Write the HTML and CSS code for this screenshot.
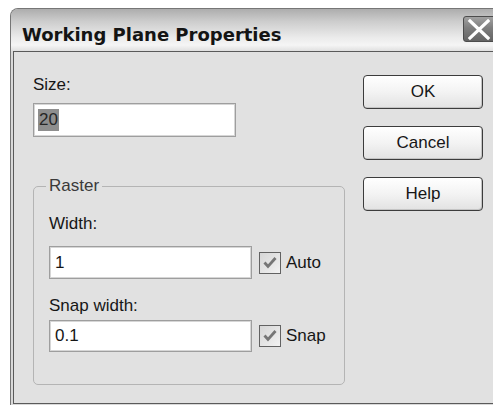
FILE: index.html
```html
<!DOCTYPE html>
<html lang="en">
<head>
<meta charset="utf-8">
<title>Working Plane Properties</title>
<link rel="stylesheet" href="styles.css">
</head>
<body>
<div class="window">
  <div class="titlebar">
    <span class="title">Working Plane Properties</span>
    <span class="close" aria-label="Close">
      <svg width="33" height="26" viewBox="0 0 33 26"><path d="M7 5 L25 22 M25 5 L7 22" stroke="#fff" stroke-width="3.2" stroke-linecap="square" fill="none"/></svg>
    </span>
  </div>
  <div class="client">
    <div class="form">
      <div class="lbl">Size:</div>
      <div class="field size-field"><span class="sel">20</span></div>
      <fieldset class="group">
        <legend>Raster</legend>
        <div class="lbl">Width:</div>
        <div class="row width-row">
          <div class="field">1</div>
          <span class="check"><svg width="20" height="20" viewBox="0 0 20 20"><path d="M4.5 9.5 L8 13.5 L15.5 5" stroke="#767676" stroke-width="2.8" fill="none"/></svg></span>
          <span class="check-text">Auto</span>
        </div>
        <div class="lbl snap-lbl">Snap width:</div>
        <div class="row snap-row">
          <div class="field">0.1</div>
          <span class="check"><svg width="20" height="20" viewBox="0 0 20 20"><path d="M4.5 9.5 L8 13.5 L15.5 5" stroke="#767676" stroke-width="2.8" fill="none"/></svg></span>
          <span class="check-text">Snap</span>
        </div>
      </fieldset>
    </div>
    <div class="buttons">
      <button class="btn">OK</button>
      <button class="btn">Cancel</button>
      <button class="btn">Help</button>
    </div>
  </div>
</div>
</body>
</html>
```
FILE: styles.css
```css
html, body {
  margin: 0;
  padding: 0;
  background: #ffffff;
  overflow: hidden;
}

body {
  font-family: "Liberation Sans", Arial, sans-serif;
  font-size: 17px;
  color: #161616;
}

/* dialog window frame */
.window {
  margin: 8px 0 0 10px;
  width: 490px;
  height: 397px;
  box-sizing: border-box;
  border: 1px solid #767676;
  border-bottom: none;
  border-radius: 8px 8px 0 0;
  background: #d9d9d9;
  display: flex;
  flex-direction: column;
}

.titlebar {
  height: 42px;
  flex: none;
  display: flex;
  justify-content: space-between;
  align-items: flex-start;
  padding: 0 3px 0 11px;
  border-radius: 7px 7px 0 0;
  background: linear-gradient(#adadad 0%, #cdcdcd 30%, #ebebeb 68%, #f5f5f5 86%, #e0e0e0 100%);
}

.title {
  font-family: "DejaVu Sans", Verdana, sans-serif;
  font-weight: bold;
  font-size: 18px;
  line-height: 21px;
  padding-top: 15px;
  color: #141414;
}

.close {
  margin-top: 7px;
  width: 33px;
  height: 26px;
  box-sizing: border-box;
  border: 1px solid #4c4c4c;
  border-radius: 3px;
  background: linear-gradient(#a2a2a2, #7e7e7e 45%, #646464);
  display: flex;
  align-items: center;
  justify-content: center;
  overflow: hidden;
}

.close svg {
  flex: none;
}

/* client area */
.client {
  flex: none;
  height: 353px;
  box-sizing: border-box;
  margin-left: 2px;
  border-left: 1px solid #5a5a5a;
  border-top: 1px solid #5a5a5a;
  border-bottom: 1px solid #5a5a5a;
  background: #e1e1e1;
  display: flex;
  gap: 18px;
  padding: 23px 0 0 19px;
}

.form {
  width: 312px;
  display: flex;
  flex-direction: column;
}

.lbl {
  line-height: 20px;
  height: 20px;
}

.field {
  background: #ffffff;
  border: 1px solid #9e9e9e;
  box-shadow: inset 0 0 0 1px #d6d6d6;
  box-sizing: border-box;
  width: 203px;
  height: 33px;
  padding: 0 5px;
  display: flex;
  align-items: center;
  line-height: 20px;
}

.size-field {
  margin-top: 8px;
  height: 34px;
  padding-left: 4px;
}

.sel {
  background: #8e8e8e;
  color: #262626;
  padding: 1px 1px;
}

/* Raster group box */
.group {
  margin: 39px 0 0 0;
  width: 312px;
  box-sizing: border-box;
  border: 1px solid #b4b4b4;
  border-radius: 5px;
  padding: 18px 0 32px 15px;
  min-inline-size: 0;
}

.group legend {
  padding: 0 3px;
  margin-left: -3px;
  line-height: 20px;
  color: #3a3a3a;
}

.row {
  display: flex;
  align-items: center;
}

.width-row {
  margin-top: 12px;
}

.snap-lbl {
  margin-top: 17px;
}

.snap-row {
  margin-top: 4px;
}

.snap-row .field {
  height: 32px;
}

.check {
  margin-left: 7px;
  width: 22px;
  height: 22px;
  box-sizing: border-box;
  border: 1px solid #626262;
  background: linear-gradient(135deg, #d6d6d6, #f2f2f2);
  display: flex;
  align-items: center;
  justify-content: center;
}

.check-text {
  margin-left: 5px;
  line-height: 20px;
}

/* command buttons */
.buttons {
  display: flex;
  flex-direction: column;
  gap: 17px;
}

.btn {
  width: 120px;
  height: 34px;
  box-sizing: border-box;
  border: 1px solid #3c3c3c;
  border-radius: 4px;
  background: linear-gradient(#ffffff, #f3f3f3 50%, #e2e2e2);
  box-shadow: inset -1px -1px 0 #c4c4c4;
  font-family: "Liberation Sans", Arial, sans-serif;
  font-size: 17px;
  color: #161616;
  padding: 0;
  margin: 0;
}
```
